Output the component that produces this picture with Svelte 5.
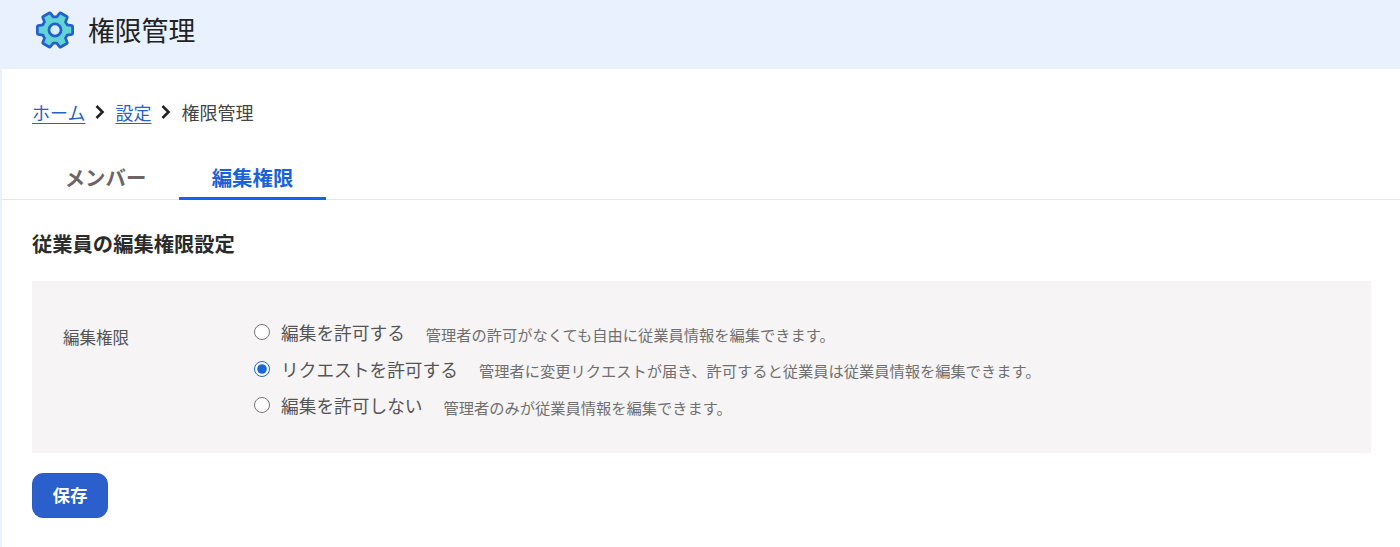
<script>
  const options = [
    { id: 'allow', label: '編集を許可する', note: '管理者の許可がなくても自由に従業員情報を編集できます。' },
    { id: 'request', label: 'リクエストを許可する', note: '管理者に変更リクエストが届き、許可すると従業員は従業員情報を編集できます。' },
    { id: 'deny', label: '編集を許可しない', note: '管理者のみが従業員情報を編集できます。' }
  ];

  let permission = $state('request');
</script>

<div class="page">
  <header class="title-bar">
    <svg class="gear" viewBox="0 0 24 24" width="44" height="44" aria-hidden="true">
      <g transform="rotate(90 12 12)">
        <path
          class="gear-body"
          d="M19.14 12.94c.04-.3.06-.61.06-.94 0-.32-.02-.64-.07-.94l2.03-1.58c.18-.14.23-.41.12-.61l-1.92-3.32c-.12-.22-.37-.29-.59-.22l-2.39.96c-.5-.38-1.03-.7-1.62-.94l-.36-2.54c-.04-.24-.24-.41-.48-.41h-3.84c-.24 0-.43.17-.47.41l-.36 2.54c-.59.24-1.13.57-1.62.94l-2.39-.96c-.22-.08-.47 0-.59.22L2.74 8.87c-.12.21-.08.47.12.61l2.03 1.58c-.05.3-.09.63-.09.94s.02.64.07.94l-2.03 1.58c-.18.14-.23.41-.12.61l1.92 3.32c.12.22.37.29.59.22l2.39-.96c.5.38 1.03.7 1.62.94l.36 2.54c.05.24.24.41.48.41h3.84c.24 0 .44-.17.47-.41l.36-2.54c.59-.24 1.13-.56 1.62-.94l2.39.96c.22.08.47 0 .59-.22l1.92-3.32c.12-.22.07-.47-.12-.61l-2.01-1.58z"
        />
        <circle class="gear-hole" cx="12" cy="12" r="3.3" />
      </g>
    </svg>
    <h1>権限管理</h1>
  </header>

  <nav class="breadcrumb">
    <a href="#home">ホーム</a>
    <svg class="chevron" viewBox="0 0 10 14" width="10" height="14" aria-hidden="true"><path d="M1.5 1 7.5 7 1.5 13" /></svg>
    <a href="#settings">設定</a>
    <svg class="chevron" viewBox="0 0 10 14" width="10" height="14" aria-hidden="true"><path d="M1.5 1 7.5 7 1.5 13" /></svg>
    <span>権限管理</span>
  </nav>

  <div class="tabs">
    <button class="tab" type="button">メンバー</button>
    <button class="tab active" type="button">編集権限</button>
  </div>

  <main>
    <h2>従業員の編集権限設定</h2>

    <section class="panel">
      <div class="field-label">編集権限</div>
      <div class="options">
        {#each options as opt}
          <label class="option">
            <input type="radio" name="permission" value={opt.id} bind:group={permission} />
            <span class="option-label">{opt.label}</span>
            <span class="option-note">{opt.note}</span>
          </label>
        {/each}
      </div>
    </section>

    <button class="save" type="button">保存</button>
  </main>
</div>

<style>
  :global(body) {
    margin: 0;
    background: #fff;
    font-family: "Noto Sans CJK JP", "Noto Sans", sans-serif;
  }

  .page {
    height: 547px;
    border-left: 2px solid #e9f1fe;
    box-sizing: border-box;
    overflow: hidden;
    color: #333;
  }

  .title-bar {
    height: 69px;
    background: #e9f1fe;
    display: flex;
    align-items: center;
    padding: 0 0 9px 31px;
    box-sizing: border-box;
    gap: 11px;
  }

  .gear-body {
    fill: #62d4d6;
    stroke: #2460cc;
    stroke-width: 1.5;
    stroke-linejoin: round;
  }

  .gear-hole {
    fill: #d2f1f7;
    stroke: #2460cc;
    stroke-width: 1.5;
  }

  h1 {
    margin: 0;
    font-size: 26.8px;
    font-weight: 400;
    line-height: 1.2;
    color: #222;
  }

  .breadcrumb {
    display: flex;
    align-items: center;
    gap: 10px;
    margin: 30px 0 0 30px;
    height: 26px;
    font-size: 18px;
  }

  .breadcrumb a {
    color: #2a62c4;
    text-underline-offset: 3px;
  }

  .breadcrumb span {
    color: #444;
  }

  .chevron path {
    fill: none;
    stroke: #222;
    stroke-width: 2.6;
  }

  .tabs {
    display: flex;
    margin-top: 33px;
    padding-left: 30px;
    border-bottom: 1px solid #e6e6e6;
  }

  .tab {
    width: 147px;
    height: 42px;
    padding: 0 0 2px;
    border: 0;
    border-bottom: 2px solid transparent;
    margin-bottom: -1px;
    background: none;
    font: inherit;
    font-size: 20.4px;
    font-weight: 700;
    color: #6b6565;
  }

  .tab.active {
    color: #1a62d8;
    border-bottom: 3px solid #1464ea;
  }

  main {
    padding: 0 29px 0 30px;
  }

  h2 {
    margin: 27px 0 0;
    font-size: 20.3px;
    line-height: 32px;
    font-weight: 700;
    color: #2b2b2b;
  }

  .panel {
    display: flex;
    margin-top: 22px;
    height: 172px;
    box-sizing: border-box;
    padding: 38px 0 0 31px;
    background: #f6f4f5;
  }

  .field-label {
    width: 191px;
    padding-top: 5px;
    font-size: 16.5px;
    line-height: 26px;
    color: #555;
  }

  .options {
    display: flex;
    flex-direction: column;
    gap: 10px;
  }

  .option {
    display: flex;
    align-items: center;
    height: 26.5px;
  }

  input[type="radio"] {
    width: 16px;
    height: 16px;
    margin: 0 11px 0 0;
    accent-color: #1a66d6;
  }

  .option-label {
    font-size: 17.7px;
    color: #555;
    margin-right: 21px;
  }

  .option-note {
    font-size: 15.25px;
    color: #707070;
    padding-top: 3px;
  }

  .save {
    display: block;
    width: 76px;
    height: 45px;
    margin-top: 20px;
    padding: 0 0 3px;
    border: 1px solid #2a5cc0;
    border-radius: 11px;
    background: #2b5fcb;
    color: #fff;
    font: inherit;
    font-size: 17.5px;
    font-weight: 700;
  }
</style>
